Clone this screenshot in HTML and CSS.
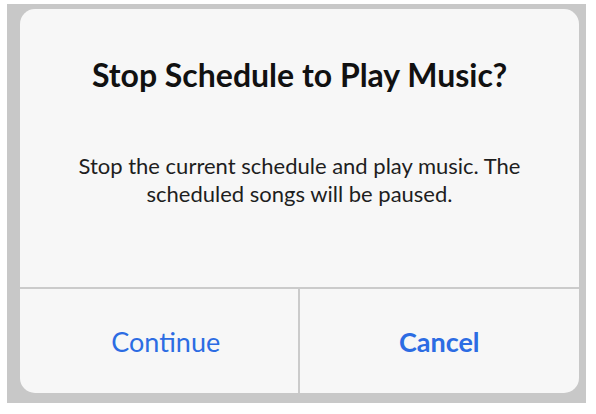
FILE: index.html
```html
<!DOCTYPE html>
<html lang="en">
  <head>
    <meta charset="UTF-8" />
    <meta name="viewport" content="width=device-width, initial-scale=1.0" />
    <title>Stop Schedule</title>
    <link rel="stylesheet" href="styles.css">
  </head>
  <body>
    <div class="frame">
      <div class="dialog">
        <div class="dialog-body">
          <h2 class="dialog-title">Stop Schedule to Play Music?</h2>
          <p class="dialog-text">
            Stop the current schedule and play music. The<br />
            scheduled songs will be paused.
          </p>
        </div>
        <div class="dialog-actions">
          <button class="action action-continue">Continue</button>
          <button class="action action-cancel">Cancel</button>
        </div>
      </div>
    </div>
  </body>
</html>
```

FILE: styles.css
```css
html,
body {
  margin: 0;
  background-color: #ffffff;
}

body {
  font-family: Lato, "Open Sans", sans-serif;
}

.frame {
  margin: 4px 10px 11px 7px;
  height: 399px;
  box-sizing: border-box;
  padding: 5px 7px 10px 13px;
  background-color: #c8c8c8;
}

.dialog {
  height: 100%;
  display: flex;
  flex-direction: column;
  background-color: #f7f7f7;
  border-radius: 15px;
  overflow: hidden;
}

.dialog-body {
  flex: 1;
  display: flex;
  flex-direction: column;
  align-items: center;
}

.dialog-title {
  margin: 48px 0 0;
  font-size: 32px;
  font-weight: 700;
  line-height: 36px;
  color: #111111;
  white-space: nowrap;
}

.dialog-text {
  margin: 59px 0 0;
  font-size: 22px;
  line-height: 28px;
  text-align: center;
  color: #1e1e1e;
  white-space: nowrap;
}

.dialog-actions {
  height: 104px;
  display: grid;
  grid-template-columns: 1fr 1fr;
  border-top: 2px solid #cbcbcb;
}

.action {
  border: none;
  background: none;
  font-family: inherit;
  font-size: 27px;
  color: #2c6ce3;
  padding: 0;
}

.action-continue {
  padding-left: 14px;
  border-right: 2px solid #cbcbcb;
}

.action-cancel {
  font-weight: 700;
}
```
